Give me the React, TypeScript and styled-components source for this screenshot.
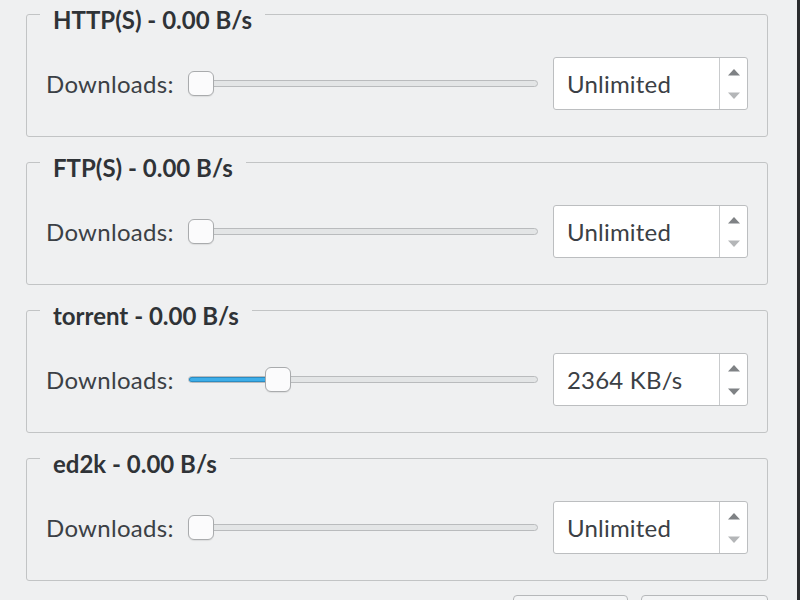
import React from 'react';
import styled, { createGlobalStyle } from 'styled-components';

type Limit = {
  name: string;
  rate: string;
  value: number;
  text: string;
};

const limits: Limit[] = [
  { name: 'HTTP(S)', rate: '0.00 B/s', value: 0, text: 'Unlimited' },
  { name: 'FTP(S)', rate: '0.00 B/s', value: 0, text: 'Unlimited' },
  { name: 'torrent', rate: '0.00 B/s', value: 0.238, text: '2364 KB/s' },
  { name: 'ed2k', rate: '0.00 B/s', value: 0, text: 'Unlimited' },
];

const GlobalStyle = createGlobalStyle`
  html, body {
    margin: 0;
    padding: 0;
    background: #eff0f1;
  }
  body {
    font-family: Lato, "Liberation Sans", sans-serif;
    color: #31363b;
    overflow: hidden;
  }
`;

const Window = styled.div`
  height: 600px;
  box-sizing: border-box;
  padding: 14px 29px 0 26px;
  border-right: 3px solid #2a2c2e;
  display: flex;
  flex-direction: column;
  gap: 25px;
`;

const Group = styled.section`
  border: 1px solid #c2c4c5;
  border-radius: 3px;
  padding: 0 19px 26px 19px;
  display: flex;
  flex-direction: column;
`;

const Title = styled.h3`
  align-self: flex-start;
  margin: -8px 0 0 -6px;
  padding: 0 13px;
  background: #eff0f1;
  font-size: 24px;
  line-height: 26px;
  font-weight: 700;
  color: #2f3337;
`;

const Row = styled.div`
  margin-top: 24px;
  height: 53px;
  display: flex;
  align-items: center;
`;

const Label = styled.span`
  font-size: 24px;
  letter-spacing: 0.3px;
  color: #3b4045;
  margin-right: 14px;
  white-space: nowrap;
`;

const SliderBox = styled.div`
  position: relative;
  flex: 1;
  height: 26px;
  display: flex;
  align-items: center;
  margin-right: 15px;
`;

const Groove = styled.div`
  width: 100%;
  height: 7px;
  box-sizing: border-box;
  border: 1px solid #b9bbbd;
  border-radius: 4px;
  background: #e3e5e6;
  overflow: hidden;
`;

const Fill = styled.div`
  height: 100%;
  background: #3daee9;
  box-shadow: inset 0 0 0 1px #2b8cc2;
  border-radius: 4px;
`;

const Handle = styled.div`
  position: absolute;
  top: 0;
  width: 26px;
  height: 25px;
  box-sizing: border-box;
  border: 1px solid #a9abad;
  border-radius: 6px;
  background: #fbfbfc;
  box-shadow: 0 1px 1px rgba(0, 0, 0, 0.08);
`;

const Spin = styled.div`
  width: 195px;
  height: 53px;
  box-sizing: border-box;
  border: 1px solid #bcbec0;
  border-radius: 3px;
  background: #ffffff;
  display: flex;
`;

const SpinText = styled.div`
  flex: 1;
  display: flex;
  align-items: center;
  padding-left: 13px;
  font-size: 24px;
  letter-spacing: 0.2px;
  color: #3b4045;
  border-right: 1px solid #c9cbcd;
`;

const Arrows = styled.div`
  width: 27px;
  display: flex;
  flex-direction: column;
  align-items: center;
  justify-content: space-between;
  padding: 10px 0 9px;
  box-sizing: border-box;
`;

const Footer = styled.div`
  display: flex;
  justify-content: flex-end;
  gap: 13px;
  margin-top: -11px;
`;

const Button = styled.button<{ $w: number }>`
  width: ${(p) => p.$w}px;
  height: 36px;
  border: 1px solid #b6b8ba;
  border-radius: 4px;
  background: #f3f4f5;
`;

const Arrow = ({ up, color }: { up?: boolean; color: string }) => (
  <svg width="14" height="8" viewBox="0 0 14 8">
    {up ? (
      <polygon points="1,7.5 7,1 13,7.5" fill={color} />
    ) : (
      <polygon points="1,0.5 7,7 13,0.5" fill={color} />
    )}
  </svg>
);

const Slider = ({ value }: { value: number }) => {
  const handleLeft = `calc(${value} * (100% - 26px))`;
  return (
    <SliderBox>
      <Groove>
        {value > 0 ? <Fill style={{ width: `calc(${value} * (100% - 26px) + 13px)` }} /> : null}
      </Groove>
      <Handle style={{ left: handleLeft }} />
    </SliderBox>
  );
};

const LimitGroup = ({ item }: { item: Limit }) => (
  <Group>
    <Title>
      {item.name} - {item.rate}
    </Title>
    <Row>
      <Label>Downloads:</Label>
      <Slider value={item.value} />
      <Spin>
        <SpinText>{item.text}</SpinText>
        <Arrows>
          <Arrow up color="#7f8285" />
          <Arrow color={item.value > 0 ? '#7f8285' : '#b4b6b8'} />
        </Arrows>
      </Spin>
    </Row>
  </Group>
);

const App = () => {
  return (
    <>
      <GlobalStyle />
      <Window>
        {limits.map((item) => (
          <LimitGroup key={item.name} item={item} />
        ))}
        <Footer>
          <Button $w={115} aria-label="OK" />
          <Button $w={127} aria-label="Cancel" />
        </Footer>
      </Window>
    </>
  );
};

export default App;
